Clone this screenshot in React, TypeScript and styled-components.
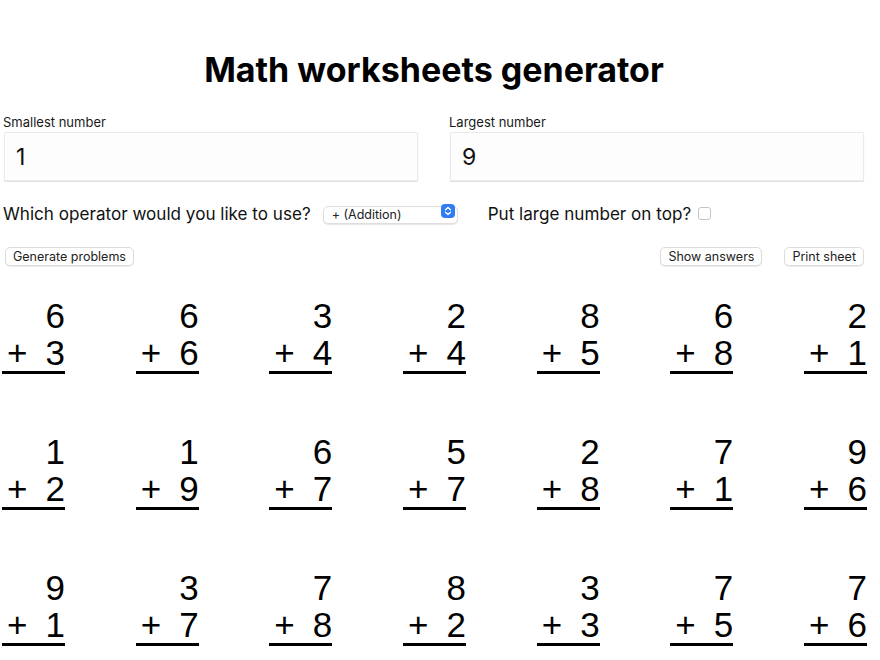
import React, { useState } from "react";
import styled, { createGlobalStyle } from "styled-components";

const GlobalStyle = createGlobalStyle`
  body {
    margin: 0;
    background: #ffffff;
    font-family: Inter, "Noto Sans", sans-serif;
    color: #111;
  }
`;

const Page = styled.div`
  width: 868px;
`;

const Title = styled.h1`
  margin: 49px 0 24px;
  font-size: 34px;
  line-height: 41px;
  font-weight: 700;
  text-align: center;
  color: #000;
`;

const RangeGrid = styled.div`
  display: grid;
  grid-template-columns: 1fr 1fr;
  column-gap: 24px;
`;

const Field = styled.label`
  display: flex;
  flex-direction: column;
`;

const FieldLabel = styled.span`
  padding-left: 3px;
  font-size: 13px;
  line-height: 16px;
  color: #1a1a1a;
`;

const NumberInput = styled.input`
  margin: 2px 4px 0;
  height: 49px;
  box-sizing: border-box;
  padding: 0 11px;
  border: 1px solid #e9ebef;
  border-radius: 1px;
  background: #fdfdfe;
  box-shadow: 0 1px 1px rgba(0, 0, 0, 0.13);
  font-family: Inter, "Noto Sans", sans-serif;
  font-size: 23px;
  color: #111;
  outline: none;
`;

const OptionsRow = styled.div`
  display: flex;
  align-items: center;
  height: 30px;
  margin-top: 17px;
  padding-left: 3px;
  font-size: 17.1px;
  color: #111;
`;

const SelectWrap = styled.div`
  position: relative;
  margin-left: 12px;
  margin-right: 30px;
`;

const Select = styled.select`
  appearance: none;
  width: 135px;
  height: 18px;
  padding: 0 0 0 8px;
  border: 1px solid #dedede;
  border-radius: 5px;
  background: #fff;
  box-shadow: 0 1px 1px rgba(0, 0, 0, 0.1);
  font-family: Inter, "Noto Sans", sans-serif;
  font-size: 12.5px;
  color: #222;
  outline: none;
`;

const Stepper = styled.span`
  position: absolute;
  right: 3px;
  top: 2px;
  width: 14px;
  height: 14px;
  border-radius: 4px;
  background: #2f7cf6;
  display: flex;
  align-items: center;
  justify-content: center;
  pointer-events: none;
`;

const Checkbox = styled.input`
  appearance: none;
  margin: 0 0 0 7px;
  width: 13px;
  height: 13px;
  border: 1px solid #c4c4c4;
  border-radius: 3px;
  background: #fff;
`;

const ButtonRow = styled.div`
  display: flex;
  align-items: center;
  margin-top: 19px;
  padding: 0 4px 0 5px;
  gap: 22px;
`;

const Spacer = styled.div`
  flex: 1;
`;

const Button = styled.button`
  height: 19px;
  padding: 0 7px;
  border: 1px solid #dcdcdc;
  border-radius: 5px;
  background: #fff;
  box-shadow: 0 1px 1px rgba(0, 0, 0, 0.08);
  font-family: Inter, "Noto Sans", sans-serif;
  font-size: 12.5px;
  line-height: 17px;
  color: #222;
`;

const ProblemGrid = styled.div`
  display: grid;
  grid-template-columns: repeat(7, 63px);
  justify-content: space-between;
  row-gap: 59px;
  margin-top: 31px;
  padding: 0 1px 0 2px;
`;

const Problem = styled.div`
  width: 63px;
  font-family: "Liberation Sans", Arial, sans-serif;
  font-size: 35px;
  line-height: 37px;
  color: #000;
  border-bottom: 3px solid #000;
`;

const TopNumber = styled.div`
  text-align: right;
`;

const BottomLine = styled.div`
  display: flex;
  justify-content: space-between;
  padding-left: 5px;
`;

const problems: [number, number][] = [
  [6, 3], [6, 6], [3, 4], [2, 4], [8, 5], [6, 8], [2, 1],
  [1, 2], [1, 9], [6, 7], [5, 7], [2, 8], [7, 1], [9, 6],
  [9, 1], [3, 7], [7, 8], [8, 2], [3, 3], [7, 5], [7, 6],
];

export default function App() {
  const [min, setMin] = useState("1");
  const [max, setMax] = useState("9");

  return (
    <Page>
      <GlobalStyle />
      <Title>Math worksheets generator</Title>
      <RangeGrid>
        <Field>
          <FieldLabel>Smallest number</FieldLabel>
          <NumberInput value={min} onChange={(e) => setMin(e.target.value)} />
        </Field>
        <Field>
          <FieldLabel>Largest number</FieldLabel>
          <NumberInput value={max} onChange={(e) => setMax(e.target.value)} />
        </Field>
      </RangeGrid>
      <OptionsRow>
        Which operator would you like to use?
        <SelectWrap>
          <Select defaultValue="add">
            <option value="add">+ (Addition)</option>
            <option value="sub">- (Subtraction)</option>
            <option value="mul">× (Multiplication)</option>
          </Select>
          <Stepper>
            <svg width="8" height="10" viewBox="0 0 8 10" fill="none" stroke="#fff" strokeWidth="1.4" strokeLinecap="round" strokeLinejoin="round">
              <path d="M1.5 3.8 L4 1.5 L6.5 3.8" />
              <path d="M1.5 6.2 L4 8.5 L6.5 6.2" />
            </svg>
          </Stepper>
        </SelectWrap>
        Put large number on top?
        <Checkbox type="checkbox" />
      </OptionsRow>
      <ButtonRow>
        <Button>Generate problems</Button>
        <Spacer />
        <Button>Show answers</Button>
        <Button>Print sheet</Button>
      </ButtonRow>
      <ProblemGrid>
        {problems.map(([a, b], i) => (
          <Problem key={i}>
            <TopNumber>{a}</TopNumber>
            <BottomLine>
              <span>+</span>
              <span>{b}</span>
            </BottomLine>
          </Problem>
        ))}
      </ProblemGrid>
    </Page>
  );
}
